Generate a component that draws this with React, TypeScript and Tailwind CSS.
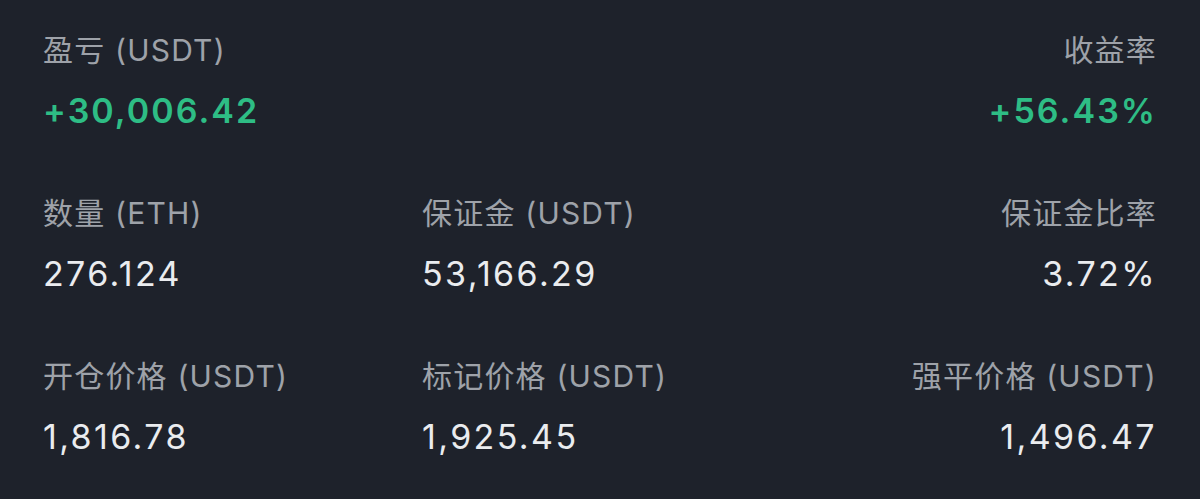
const font = { fontFamily: 'Inter, "Noto Sans CJK SC", sans-serif' };

type Cell = { label: string; value: string; green?: boolean };

const rows: (Cell | null)[][] = [
  [{ label: "盈亏 (USDT)", value: "+30,006.42", green: true }, null, { label: "收益率", value: "+56.43%", green: true }],
  [
    { label: "数量 (ETH)", value: "276.124" },
    { label: "保证金 (USDT)", value: "53,166.29" },
    { label: "保证金比率", value: "3.72%" },
  ],
  [
    { label: "开仓价格 (USDT)", value: "1,816.78" },
    { label: "标记价格 (USDT)", value: "1,925.45" },
    { label: "强平价格 (USDT)", value: "1,496.47" },
  ],
];

function Item({ cell, right }: { cell: Cell | null; right?: boolean }) {
  if (!cell) return <div />;
  return (
    <div className={`flex flex-col ${right ? "items-end" : "items-start"}`}>
      <div className="text-[30px] leading-none tracking-[0.04em] text-[#9ea2a9]">{cell.label}</div>
      <div
        className={`mt-[29px] text-[34px] leading-none ${
          cell.green
            ? "font-semibold tracking-[0.06em] text-[#2ebd85]"
            : "tracking-[0.07em] text-[#eaecef]"
        }`}
      >
        {cell.value}
      </div>
    </div>
  );
}

export default function App() {
  return (
    <div className="w-[1200px] h-[499px] bg-[#1e222b] px-[43px] pt-[35px]" style={font}>
      <div className="flex flex-col gap-[70px]">
        {rows.map((r, i) => (
          <div key={i} className="grid grid-cols-[379px_1fr_1fr]">
            <Item cell={r[0]} />
            <Item cell={r[1]} />
            <Item cell={r[2]} right />
          </div>
        ))}
      </div>
    </div>
  );
}
